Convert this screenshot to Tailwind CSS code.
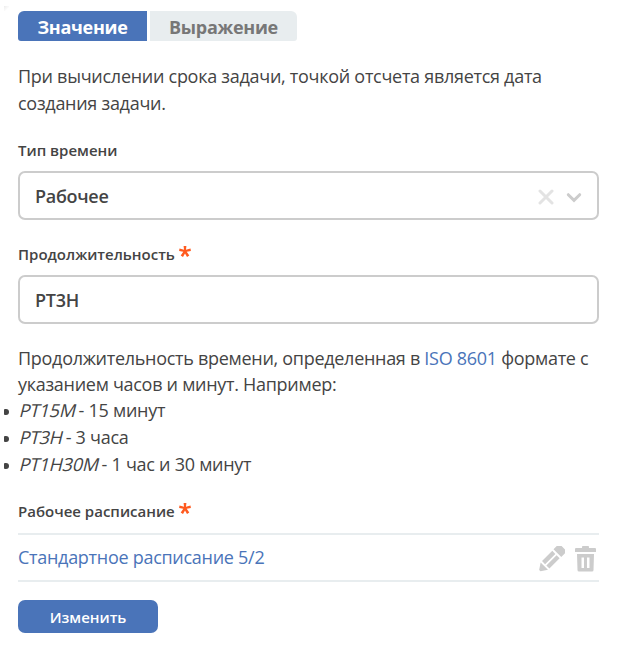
<!DOCTYPE html>
<html lang="ru"><head><meta charset="utf-8"><title>Срок задачи</title>
<script src="https://cdn.jsdelivr.net/npm/@tailwindcss/browser@4"></script></head>
<body class="bg-white w-[618px] h-[649px] overflow-hidden font-['Open_Sans',sans-serif] text-[#444]">
<div class="absolute left-1 top-[6px] w-[5px] h-[5px] bg-linear-to-br from-[#ececec] to-white to-70%"></div>
<main class="pl-[18px] pr-[19px] pt-[11px]">
<div class="flex gap-[3px] h-[30px] text-[18px] font-bold leading-[33px] text-center tracking-[-0.3px]">
<button class="w-[129px] rounded-tl-[6px] rounded-bl-[3px] bg-[#4a74b9] text-white">Значение</button>
<button class="w-[147px] rounded-tr-[6px] rounded-br-[3px] bg-[#e8edef] text-[#777]">Выражение</button>
</div>
<p class="mt-[22px] text-[18px] leading-[27px] whitespace-nowrap tracking-[-0.28px]">При вычислении срока задачи, точкой отсчета является дата<br>создания задачи.</p>
<label class="block mt-[23px] h-[31px] leading-[20px] text-[15px] font-semibold">Тип времени</label>
<div class="flex items-center h-[49px] rounded-[7px] border-2 border-[#ccc] px-[15px] text-[18px] font-semibold tracking-[-0.3px]"><span class="grow pt-[2px]">Рабочее</span>
<svg class="w-4 h-4 mt-[2px]" viewBox="0 0 16 16" fill="none" stroke="#e3e3e3" stroke-width="3" stroke-linecap="round"><path d="M2 2l12 12M14 2L2 14"/></svg>
<svg class="ml-3 w-4 h-4 mt-[2px]" viewBox="0 0 16 16" fill="none" stroke="#ccc" stroke-width="3" stroke-linecap="round"><path d="M2.300 5.700L8 11.300 13.700 5.700"/></svg></div>
<label class="flex mt-[24px] h-[31px] leading-[20px] text-[15px] font-semibold">Продолжительность
<svg class="ml-[4px] mt-[2px] w-3 h-3" viewBox="0 0 12 12" fill="#ff5a1f"><path d="M4.600 0h2.800L7 3.800l4.500-1.200.4 2.500-4.200.7 2.600 3.600-2.300 1.500L6 7.400l-2 3.500-2.300-1.500 2.600-3.600-4.200-.7.4-2.500L5 3.800z"/></svg></label>
<div class="flex items-center h-[49px] rounded-[7px] border-2 border-[#ccc] px-[15px] pt-[2px] text-[18px] font-semibold tracking-[-0.3px]">PT3H</div>
<p class="mt-[21px] h-[52px] text-[18px] leading-[26px] whitespace-nowrap tracking-[-0.29px]">Продолжительность времени, определенная в <a class="text-[#4a74b9]">ISO 8601</a> формате с<br>указанием часов и минут. Например:</p>
<ul class="text-[18px] leading-[27px] tracking-[-0.27px]">
<li class="relative before:absolute before:left-[-14px] before:top-[12px] before:w-[5px] before:h-[6px] before:rounded-r-[3px] before:rounded-l-[1px] before:bg-[#444]"><i class="relative left-[1.5px] inline-block not-italic skew-x-[-14deg]">PT15M</i> - 15 минут</li>
<li class="relative before:absolute before:left-[-14px] before:top-[12px] before:w-[5px] before:h-[6px] before:rounded-r-[3px] before:rounded-l-[1px] before:bg-[#444]"><i class="relative left-[1.5px] inline-block not-italic skew-x-[-14deg]">PT3H</i> - 3 часа</li>
<li class="relative before:absolute before:left-[-14px] before:top-[12px] before:w-[5px] before:h-[6px] before:rounded-r-[3px] before:rounded-l-[1px] before:bg-[#444]"><i class="relative left-[1.5px] inline-block not-italic skew-x-[-14deg]">PT1H30M</i> - 1 час и 30 минут</li></ul>
<label class="flex mt-[23px] h-[32px] leading-[20px] text-[15px] font-semibold">Рабочее расписание
<svg class="ml-[4px] mt-[2px] w-3 h-3" viewBox="0 0 12 12" fill="#ff5a1f"><path d="M4.600 0h2.800L7 3.800l4.500-1.200.4 2.500-4.200.7 2.600 3.600-2.300 1.500L6 7.400l-2 3.500-2.300-1.500 2.600-3.600-4.200-.7.4-2.500L5 3.800z"/></svg></label>
<div class="flex items-center h-[49px] border-y-2 border-[#e8edef] text-[18px] text-[#4a74b9] tracking-[-0.28px]"><span class="grow">Стандартное расписание 5/2</span>
<svg class="w-[26px] h-[26px] mr-[10px] mt-[3px]" viewBox="0 0 26 26" fill="#ccc"><g transform="translate(0 25.500) rotate(-45)"><path d="M1.200-1L7.500-5.200V5.200L1.200 1zM9.500-5.200H24V-.9H9.500zM9.500 .9H24V5.200H9.500zM26-5.500H32.500Q34-5.500 34-4V4Q34 5.500 32.500 5.500H26z"/></g></svg>
<svg class="w-[21px] h-[26px] mr-[3px] mt-[3px]" viewBox="0 0 21 26" fill="#ccc"><path d="M7.500 0h6q.5 0 .5 2h6q1 0 1 1v3H0V3q0-1 1-1h6q0-2 .5-2z"/><path fill-rule="evenodd" d="M2 8h17l-.5 16q0 1.500-1.500 1.500H4Q2.500 25.500 2.500 24zM6.500 11.500v10.500h2.500V11.500zM12 11.500v10.500h2.500V11.500z"/></svg></div>
<button class="mt-[18px] block w-[140px] h-[33px] rounded-[7px] bg-[#4a74b9] text-white text-[15px] font-semibold leading-[35px]">Изменить</button>
</main></body></html>
